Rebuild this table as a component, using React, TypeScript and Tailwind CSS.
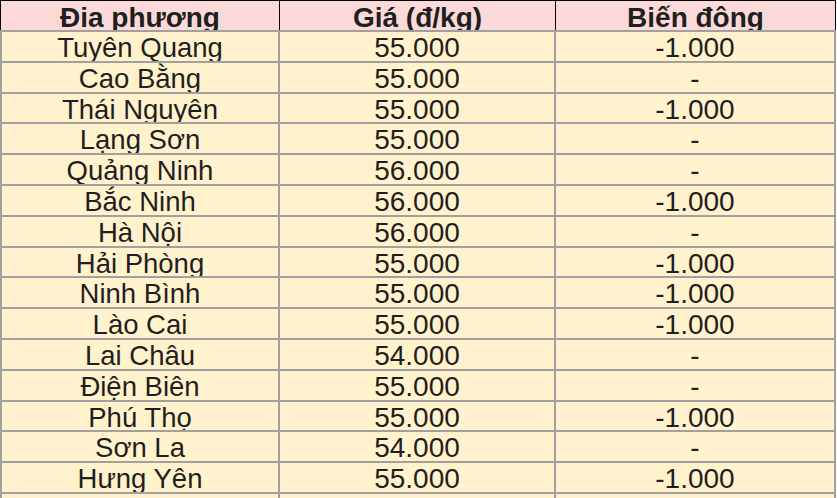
import React from "react";

const rows: [string, string, string][] = [
  ["Tuyên Quang", "55.000", "-1.000"],
  ["Cao Bằng", "55.000", "-"],
  ["Thái Nguyên", "55.000", "-1.000"],
  ["Lạng Sơn", "55.000", "-"],
  ["Quảng Ninh", "56.000", "-"],
  ["Bắc Ninh", "56.000", "-1.000"],
  ["Hà Nội", "56.000", "-"],
  ["Hải Phòng", "55.000", "-1.000"],
  ["Ninh Bình", "55.000", "-1.000"],
  ["Lào Cai", "55.000", "-1.000"],
  ["Lai Châu", "54.000", "-"],
  ["Điện Biên", "55.000", "-"],
  ["Phú Thọ", "55.000", "-1.000"],
  ["Sơn La", "54.000", "-"],
  ["Hưng Yên", "55.000", "-1.000"],
  ["", "", ""],
];

export default function App() {
  return (
    <div
      className="w-[837px] h-[498px] overflow-hidden bg-white text-[#1f1f1f]"
      style={{ fontFamily: '"Liberation Sans", Arial, sans-serif' }}
    >
      <div className="w-[836px]">
        {/* header */}
        <div className="flex h-[30px] border-t border-l border-black bg-[#fcd9d9] text-[28px] font-bold">
          <div className="w-[279px] h-[29px] border-r border-black text-center leading-[33px] overflow-hidden">
            Đia phương
          </div>
          <div className="w-[276px] h-[29px] border-r border-black text-center leading-[33px] overflow-hidden">
            Giá (đ/kg)
          </div>
          <div className="w-[280px] h-[29px] border-r border-black text-center leading-[33px] overflow-hidden">
            Biến đông
          </div>
        </div>
        {/* body */}
        {rows.map((r, i) => (
          <div
            key={i}
            className="flex h-[30.8px] border-t-2 border-l-2 border-[#a0a0a0] bg-[#fff2cc] text-[28px]"
          >
            <div className="w-[278px] border-r-2 border-[#a0a0a0] text-center text-[27.5px] leading-[31px] overflow-hidden">
              {r[0]}
            </div>
            <div className="w-[276px] border-r-2 border-[#a0a0a0] text-center leading-[31px] overflow-hidden">
              {r[1]}
            </div>
            <div className="w-[280px] border-r-2 border-[#a0a0a0] text-center leading-[31px] overflow-hidden">
              {r[2]}
            </div>
          </div>
        ))}
      </div>
    </div>
  );
}
